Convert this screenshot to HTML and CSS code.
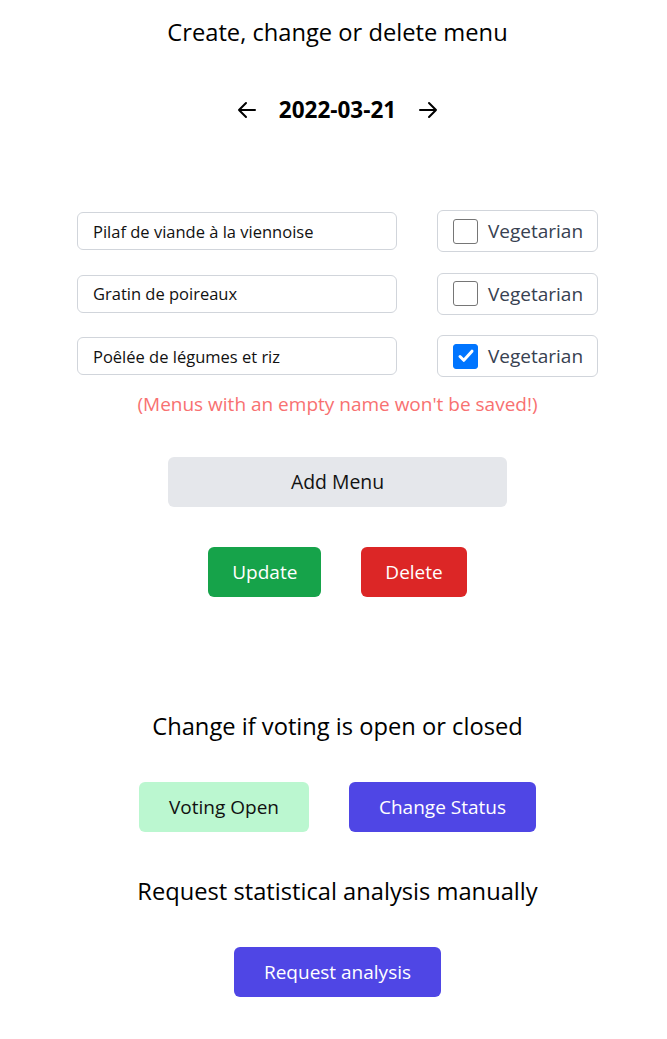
FILE: index.html
```html
<!DOCTYPE html>
<html lang="en">
<head>
<meta charset="utf-8">
<title>Menu admin</title>
<link rel="stylesheet" href="styles.css">
</head>
<body>
<main class="page">
  <h1 class="heading">Create, change or delete menu</h1>
  <div class="date-nav">
    <button class="arrow" aria-label="Previous day">
      <svg width="24" height="24" viewBox="0 0 24 24" fill="none" stroke="currentColor" stroke-width="2" stroke-linecap="round" stroke-linejoin="round"><path d="M11 19l-7-7 7-7M4 12h16"/></svg>
    </button>
    <span class="date">2022-03-21</span>
    <button class="arrow" aria-label="Next day">
      <svg width="24" height="24" viewBox="0 0 24 24" fill="none" stroke="currentColor" stroke-width="2" stroke-linecap="round" stroke-linejoin="round"><path d="M13 5l7 7-7 7M20 12H4"/></svg>
    </button>
  </div>

  <div class="menus">
    <div class="menu-row">
      <input class="menu-input" type="text" value="Pilaf de viande à la viennoise">
      <label class="veg"><span class="check"></span><span>Vegetarian</span></label>
    </div>
    <div class="menu-row">
      <input class="menu-input" type="text" value="Gratin de poireaux">
      <label class="veg"><span class="check"></span><span>Vegetarian</span></label>
    </div>
    <div class="menu-row">
      <input class="menu-input" type="text" value="Poêlée de légumes et riz">
      <label class="veg"><span class="check checked"><svg width="20" height="20" viewBox="0 0 20 20" fill="none" stroke="#fff" stroke-width="3" stroke-linecap="round" stroke-linejoin="round"><path d="M4 10.5l3.8 3.8L16 5.2"/></svg></span><span>Vegetarian</span></label>
    </div>
  </div>
  <p class="warning">(Menus with an empty name won't be saved!)</p>

  <button class="btn btn-add">Add Menu</button>

  <div class="btn-row">
    <button class="btn btn-green">Update</button>
    <button class="btn btn-red">Delete</button>
  </div>

  <h2 class="heading section">Change if voting is open or closed</h2>
  <div class="btn-row">
    <button class="btn btn-lg btn-mint">Voting Open</button>
    <button class="btn btn-lg btn-indigo">Change Status</button>
  </div>

  <h2 class="heading section2">Request statistical analysis manually</h2>
  <div class="btn-row">
    <button class="btn btn-lg btn-indigo">Request analysis</button>
  </div>
</main>
</body>
</html>
```

FILE: styles.css
```css
* { box-sizing: border-box; }

body {
  margin: 0;
  background: #fff;
  color: #000;
  font-family: "Open Sans", "Noto Sans", sans-serif;
}

.page {
  display: flex;
  flex-direction: column;
  align-items: center;
  padding-top: 16px;
  padding-left: 8px;
}

.heading {
  margin: 0;
  font-size: 23.7px;
  line-height: 32px;
  font-weight: 400;
}

.date-nav {
  margin-top: 48px;
  display: flex;
  align-items: center;
  gap: 20px;
  height: 28px;
}

.arrow {
  border: 0;
  background: none;
  padding: 0;
  width: 24px;
  height: 24px;
  color: #000;
  display: flex;
}

.date {
  font-size: 22.5px;
  line-height: 28px;
  font-weight: 700;
}

.menus {
  margin-top: 86px;
  display: flex;
  flex-direction: column;
  gap: 20.5px;
}

.menu-row {
  display: flex;
  align-items: center;
  gap: 40px;
  height: 42px;
}

.menu-input {
  width: 320px;
  height: 38px;
  border: 1px solid #d1d5db;
  border-radius: 6px;
  padding: 0 15px;
  font-family: inherit;
  font-size: 16.5px;
  color: #111;
  background: #fff;
}

.veg {
  width: 161px;
  height: 42px;
  border: 1px solid #d1d5db;
  border-radius: 6px;
  display: flex;
  align-items: center;
  padding-left: 15px;
  gap: 10px;
  font-size: 19px;
  color: #374151;
}

.check {
  width: 25px;
  height: 25px;
  border: 1px solid #767676;
  border-radius: 3px;
  display: flex;
  align-items: center;
  justify-content: center;
  background: #fff;
}

.check.checked {
  background: #0075ff;
  border-color: #0075ff;
}

.warning {
  margin: 13px 0 0;
  font-size: 19px;
  line-height: 28px;
  color: #f87171;
}

.btn {
  border: 0;
  border-radius: 6px;
  font-family: inherit;
  font-size: 19px;
  line-height: 28px;
  height: 50px;
  padding: 0 24px;
  cursor: pointer;
}

.btn-add {
  margin-top: 39px;
  width: 339px;
  background: #e5e7eb;
  color: #111;
  font-size: 19.4px;
}

.btn-row {
  margin-top: 40px;
  display: flex;
  gap: 40px;
}

.btn-lg { padding: 0 30px; }

.btn-green { background: #16a34a; color: #fff; }
.btn-red { background: #dc2626; color: #fff; }
.btn-mint { background: #bbf7d0; color: #111; }
.btn-indigo { background: #4f46e5; color: #fff; }

.section { margin-top: 113px; }
.section2 { margin-top: 43px; }
```
